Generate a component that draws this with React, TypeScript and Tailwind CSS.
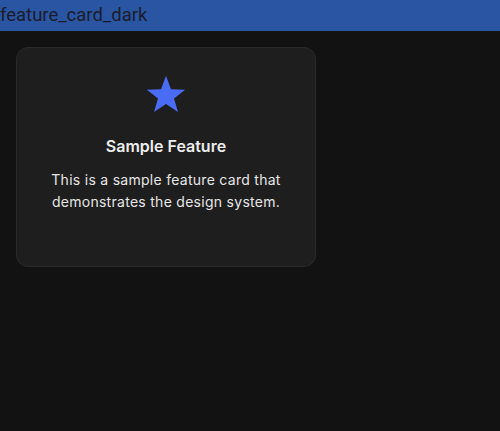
export default function App() {
  return (
    <div className="min-h-[431px] bg-[#121212] font-['Inter',sans-serif]">
      <div className="h-[31px] bg-[#2a55a3] flex items-center">
        <span className="font-['Roboto',sans-serif] text-[18.5px] leading-none text-[#1a1c2c]">feature_card_dark</span>
      </div>
      <div className="p-4">
        <div className="w-[300px] h-[220px] rounded-xl border border-[#2a2a2a] bg-[#1e1e1e] px-6 pt-[27px] flex flex-col items-center text-center">
          <svg width="42" height="40" viewBox="0 0 24 23" className="text-[#4a6cf5]">
            <path
              fill="currentColor"
              d="M12 0.5 L14.85 8.2 L23 8.45 L16.6 13.45 L18.9 21.3 L12 16.7 L5.1 21.3 L7.4 13.45 L1 8.45 L9.15 8.2 Z"
            />
          </svg>
          <h3 className="mt-[19px] text-[16px] leading-6 font-semibold text-[#ededed]">Sample Feature</h3>
          <p className="mt-[11px] text-[14px] leading-[22px] tracking-[0.02em] text-[#e6e6e6]">
            This is a sample feature card that demonstrates the design system.
          </p>
        </div>
      </div>
    </div>
  )
}
